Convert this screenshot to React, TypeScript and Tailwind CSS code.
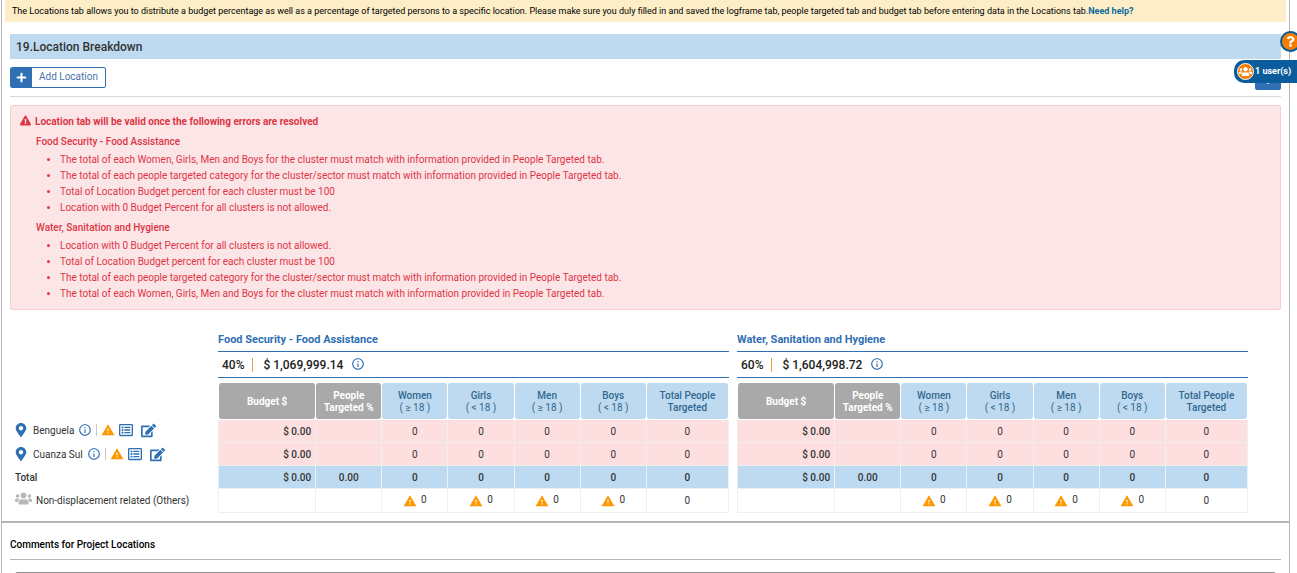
import React from "react";
import {
  FaChevronDown,
  FaEdit,
  FaExclamationTriangle,
  FaMapMarkerAlt,
  FaPlus,
  FaQuestion,
  FaRegListAlt,
  FaUsers,
} from "react-icons/fa";
import { MdInfoOutline, MdWarning } from "react-icons/md";

type Cluster = { name: string; percent: string; budget: string; errors: string[] };

const MATCH_WGMB =
  "The total of each Women, Girls, Men and Boys for the cluster must match with information provided in People Targeted tab.";
const MATCH_CATEGORY =
  "The total of each people targeted category for the cluster/sector must match with information provided in People Targeted tab.";
const BUDGET_TOTAL = "Total of Location Budget percent for each cluster must be 100";
const ZERO_BUDGET = "Location with 0 Budget Percent for all clusters is not allowed.";

const clusters: Cluster[] = [
  {
    name: "Food Security - Food Assistance",
    percent: "40%",
    budget: "$ 1,069,999.14",
    errors: [MATCH_WGMB, MATCH_CATEGORY, BUDGET_TOTAL, ZERO_BUDGET],
  },
  {
    name: "Water, Sanitation and Hygiene",
    percent: "60%",
    budget: "$ 1,604,998.72",
    errors: [ZERO_BUDGET, BUDGET_TOTAL, MATCH_CATEGORY, MATCH_WGMB],
  },
];

const locations = ["Benguela", "Cuanza Sul"];
const groups = [
  ["Women", "( ≥ 18 )"],
  ["Girls", "( < 18 )"],
  ["Men", "( ≥ 18 )"],
  ["Boys", "( < 18 )"],
];

const cell = "border-r border-b border-[#efefef] px-0 pt-0.5 pb-0 text-center";
const firstCell = "border-r border-b border-l border-[#efefef] pt-0.5 pr-1 pb-0 pl-0 text-right font-medium";
const lastRowCell = "border-r border-b border-[#efefef] p-0 text-center";
const head = "rounded-[3px] border-r border-b border-white bg-clip-padding px-0 pt-0.5 pb-0 text-center";

function ClusterTable({ cluster }: { cluster: Cluster }) {
  return (
    <section className="min-w-0">
      <h2 className="h-5 text-[11px] leading-[18px] font-bold text-[#2f6fb3]">{cluster.name}</h2>
      <div className="flex h-[27px] items-center border-y border-[#2f6fb3] pl-1 text-[12px] font-medium text-[#222]">
        <span>{cluster.percent}</span>
        <span className="mr-2.5 ml-2 h-3.5 w-px bg-[#f0a04b]" />
        <span>{cluster.budget}</span>
        <button type="button" aria-label="Budget information" className="mb-0.5 ml-2 text-[#2f6fb3]">
          <MdInfoOutline size={14} />
        </button>
      </div>
      <table className="mt-[5px] w-full table-fixed border-separate border-spacing-0 text-[10px] leading-3 text-[#333]">
        <colgroup>
          <col className="w-[98px]" />
          <col className="w-[66px]" />
          <col className="w-[66px]" />
          <col className="w-[66px]" />
          <col className="w-[66px]" />
          <col className="w-[66px]" />
          <col className="w-[82px]" />
        </colgroup>
        <thead>
          <tr className="h-[37px]">
            <th className={`${head} border-l bg-[#a9a9a9] font-bold text-white`}>Budget $</th>
            <th className={`${head} bg-[#a9a9a9] font-bold text-white`}>People Targeted %</th>
            {groups.map(([name, age]) => (
              <th key={name} className={`${head} bg-[#bedaf0] font-medium text-[#31688f]`}>
                {name}
                <br />
                <span className="font-normal">{age}</span>
              </th>
            ))}
            <th className={`${head} bg-[#bedaf0] font-medium text-[#31688f]`}>Total People Targeted</th>
          </tr>
        </thead>
        <tbody>
          {locations.map((l) => (
            <tr key={l} className="h-[23px] bg-[#fddfe0]">
              <td className={firstCell}>$ 0.00</td>
              <td className={cell} />
              {groups.map(([name]) => (
                <td key={name} className={cell}>0</td>
              ))}
              <td className={cell}>0</td>
            </tr>
          ))}
          <tr className="h-[23px] bg-[#bedaf0] font-medium">
            <td className={firstCell}>$ 0.00</td>
            <td className={cell}>0.00</td>
            {groups.map(([name]) => (
              <td key={name} className={cell}>0</td>
            ))}
            <td className={cell}>0</td>
          </tr>
          <tr className="h-6">
            <td className={firstCell} />
            <td className={lastRowCell} />
            {groups.map(([name]) => (
              <td key={name} className={lastRowCell}>
                <span className="inline-flex items-start gap-1 align-middle">
                  <MdWarning size={14} className="text-[#ff9800]" />0
                </span>
              </td>
            ))}
            <td className={lastRowCell}>0</td>
          </tr>
        </tbody>
      </table>
    </section>
  );
}

export default function App() {
  return (
    <div className="relative h-screen overflow-hidden bg-white font-['Roboto',sans-serif] text-[#333]">
      <main className="mr-[7px] ml-px flex h-full flex-col border-x border-[#b5b5b5]">
        <p className="mr-[3px] ml-[3px] h-[22px] shrink-0 bg-[#fdeec8] pl-[7px] text-[9px] leading-[22px] text-black">
          The Locations tab allows you to distribute a budget percentage as well as a percentage of targeted persons to a
          specific location. Please make sure you duly filled in and saved the logframe tab, people targeted tab and
          budget tab before entering data in the Locations tab.
          <a href="#help" className="font-bold text-[#0b6a9c]">Need help?</a>
        </p>
        <div className="mx-2 mt-3 shrink-0">
          <h1 className="h-[25px] bg-[#bedaf0] pl-1.5 text-[12px] leading-[26px] font-medium">19.Location Breakdown</h1>
          <div className="mt-2 flex items-start justify-between border-b border-[#d9d9d9] pb-1.5">
            <button
              type="button"
              className="flex h-[21px] items-stretch overflow-hidden rounded-[2px] border border-[#2f6fb3] bg-white text-[10px] text-[#4a73ab]"
            >
              <span className="flex w-[21px] items-center justify-center bg-[#2f6fb3] text-white">
                <FaPlus size={11} />
              </span>
              <span className="px-[7px] leading-[18px]">Add Location</span>
            </button>
            <button
              type="button"
              aria-label="Scroll down"
              className="flex h-[23px] w-[26px] items-end justify-center rounded-[2px] bg-[#2f6fb3] pb-1 text-white"
            >
              <FaChevronDown size={8} />
            </button>
          </div>

          <div className="mt-2 h-[205px] rounded-[2px] border border-[#f6cdd1] bg-[#fce5e7] pt-2 pl-[9px] text-[10px] text-[#dc3545]">
            <p className="flex items-start gap-1 leading-4 font-bold">
              <FaExclamationTriangle size={11} className="mt-px" />
              Location tab will be valid once the following errors are resolved
            </p>
            {clusters.map((c) => (
              <div key={c.name} className="pt-1 pl-4">
                <h3 className="leading-4 font-medium">{c.name}</h3>
                <ul className="list-disc pt-0.5 pl-6 leading-4">
                  {c.errors.map((e) => (
                    <li key={e}>{e}</li>
                  ))}
                </ul>
              </div>
            ))}
          </div>

          <div className="mt-[21px] grid grid-cols-[200px_minmax(0,1fr)_minmax(0,1fr)] gap-x-2 pr-[33px]">
            <div className="pt-[87px] pl-1 text-[10px]">
              {locations.map((l) => (
                <div key={l} className="flex h-6 items-center">
                  <FaMapMarkerAlt size={14} className="mr-[5px] text-[#2f6fb3]" />
                  <span>{l}</span>
                  <button type="button" aria-label={`${l} information`} className="ml-1 text-[#2f6fb3]">
                    <MdInfoOutline size={14} />
                  </button>
                  <span className="mx-1 h-3 w-px bg-[#c8c8c8]" />
                  <MdWarning size={14} className="text-[#ff9800]" />
                  <button type="button" aria-label={`${l} details`} className="ml-1 text-[#2f6fb3]">
                    <FaRegListAlt size={14} />
                  </button>
                  <button type="button" aria-label={`Edit ${l}`} className="ml-2 text-[#2f6fb3]">
                    <FaEdit size={15} />
                  </button>
                </div>
              ))}
              <div className="flex h-[22px] items-center pl-px font-medium">Total</div>
              <div className="flex h-6 items-center gap-1 pl-px">
                <FaUsers size={17} className="mb-1 text-[#b8b8b8]" />
                Non-displacement related (Others)
              </div>
            </div>
            {clusters.map((c) => (
              <ClusterTable key={c.name} cluster={c} />
            ))}
          </div>
        </div>
        <div className="mt-2 shrink-0 border-t-2 border-[#b5b5b5] px-2 pt-3.5">
          <label htmlFor="comments" className="block border-b border-[#b5b5b5] pb-1.5 text-[10px] leading-4 font-medium text-black">
            Comments for Project Locations
          </label>
          <div className="px-[5px] pt-3">
            <textarea id="comments" className="block h-20 w-full resize-none rounded-[2px] border border-[#8f8f8f]" />
          </div>
        </div>
      </main>
      <button
        type="button"
        aria-label="Help"
        className="absolute top-[31px] -right-[4px] flex size-[21px] items-center justify-center rounded-full border-2 border-[#0a5c9c] bg-[#f57c00] text-white"
      >
        <FaQuestion size={11} />
      </button>
      <div className="absolute top-[60px] right-0 flex h-[23px] w-[63px] items-center rounded-l-[10px] bg-[#0a5c9c] pl-[3px] text-[9px] font-bold text-white">
        <span className="mr-px flex size-[17px] shrink-0 items-center justify-center rounded-full border border-white bg-[#f57c00]">
          <FaUsers size={13} />
        </span>
        1 user(s)
      </div>
    </div>
  );
}
